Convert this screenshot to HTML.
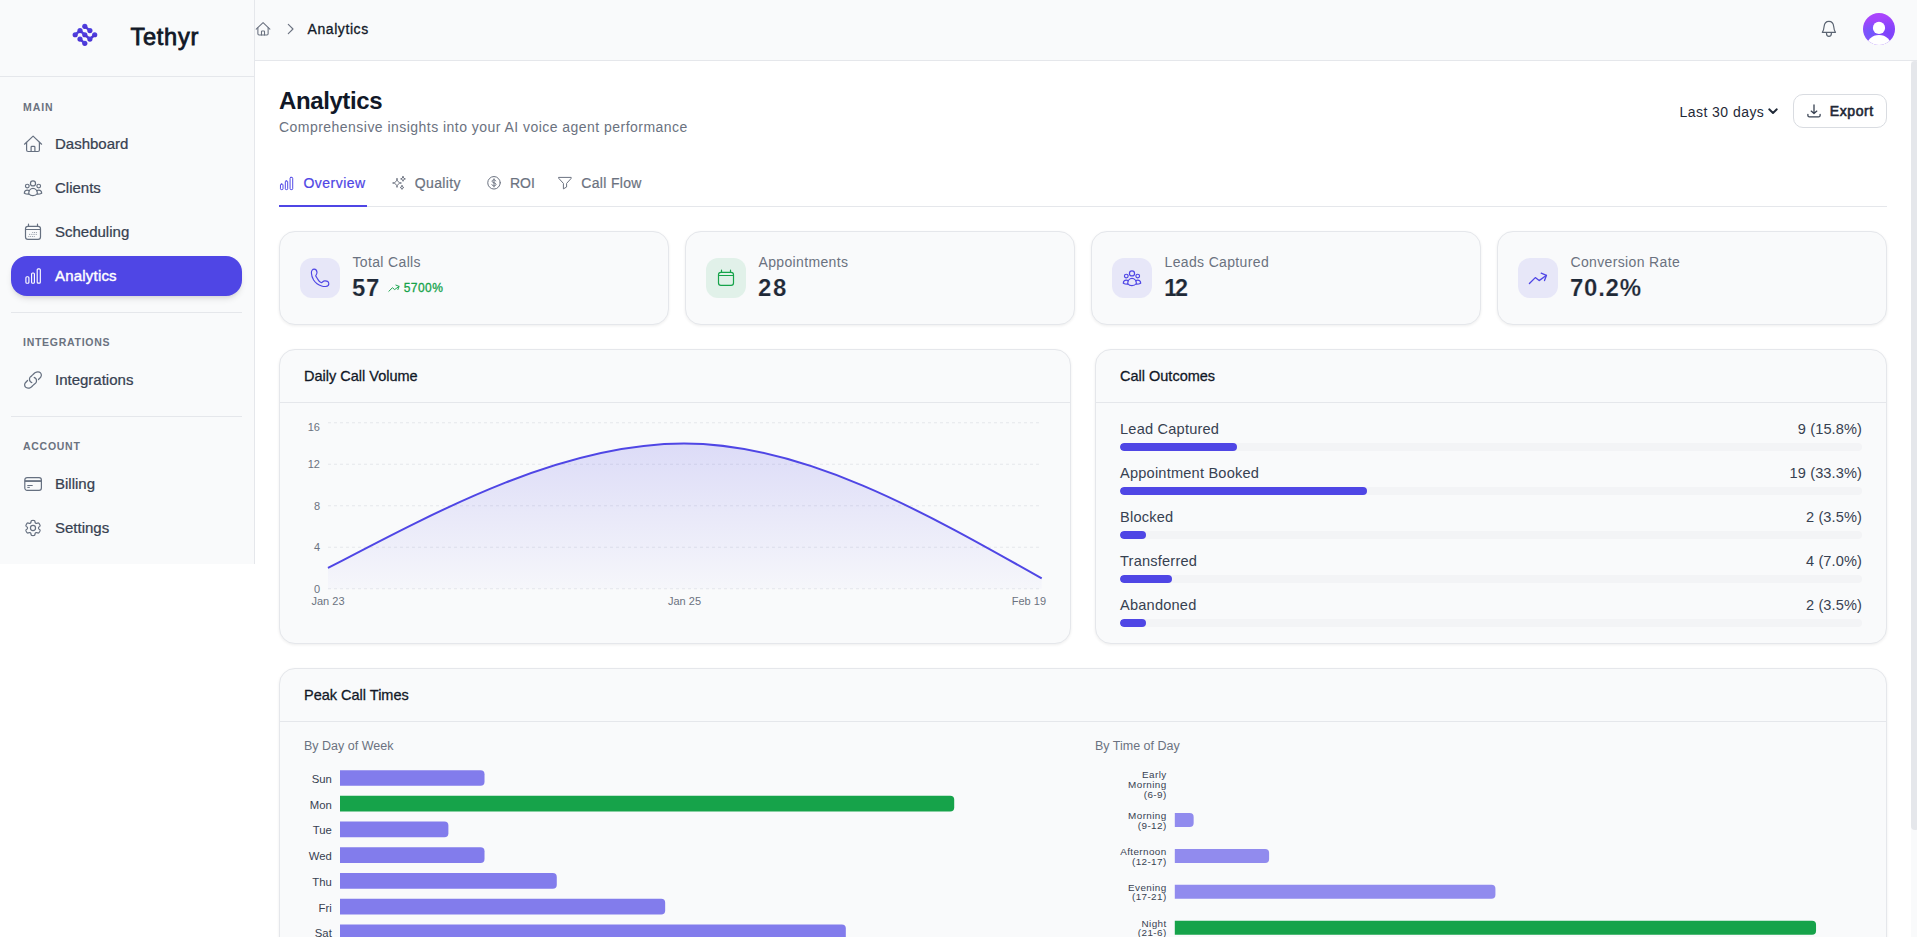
<!DOCTYPE html>
<html lang="en">
<head>
<meta charset="utf-8">
<title>Analytics - Tethyr</title>
<style>
*{box-sizing:border-box;margin:0;padding:0}
html,body{width:1917px;height:937px;overflow:hidden;background:#fff}
body{font-family:"Liberation Sans",sans-serif;color:#374151;position:relative;-webkit-font-smoothing:antialiased}
svg{display:block;overflow:visible}
.ab{position:absolute}
/* ---------- sidebar ---------- */
.sidebar{position:absolute;left:0;top:0;width:255px;height:564px;background:#f9fafb;border-right:1px solid #e5e7eb}
.brand{position:absolute;left:0;top:0;width:254px;height:77px;border-bottom:1px solid #e5e7eb}
.brand svg{position:absolute;left:71px;top:21px}
.brand .name{position:absolute;left:130.4px;top:21.3px;font-size:23.6px;line-height:32px;color:#111827;font-weight:400;-webkit-text-stroke:.8px #111827;white-space:nowrap;letter-spacing:.75px}
.sec{position:absolute;left:23px;font-size:10.5px;line-height:14px;font-weight:700;letter-spacing:.72px;color:#6b7280;white-space:nowrap}
.nav{position:absolute;left:11px;width:231px;height:40px;border-radius:14px;white-space:nowrap}
.nav svg{position:absolute;left:12px;top:10px}
.nav span{position:absolute;left:44px;top:10.2px;font-size:15px;line-height:20px;color:#374151;-webkit-text-stroke:.24px #374151}
.nav.on{background:#4f46e5;border-radius:16px;box-shadow:0 4px 6px -1px rgba(0,0,0,.1),0 2px 4px -2px rgba(0,0,0,.1)}
.nav.on span{color:#fff;-webkit-text-stroke:.4px #fff;letter-spacing:.2px}
.sdiv{position:absolute;left:11px;width:231px;height:1px;background:#e5e7eb}
/* ---------- topbar ---------- */
.topbar{position:absolute;left:255px;top:0;width:1662px;height:61px;background:#f9fafb;border-bottom:1px solid #e5e7eb}
.crumb{position:absolute;left:52.5px;top:19px;font-size:14px;line-height:20px;color:#111827;white-space:nowrap;-webkit-text-stroke:.3px #111827;letter-spacing:.58px}
.avatar{position:absolute;left:1608px;top:12.85px;width:32px;height:32px;border-radius:50%;overflow:hidden;background:radial-gradient(circle at 24% 62%,#6e59fc 0%,rgba(110,89,252,0) 42%),radial-gradient(circle at 80% 62%,#7a42fb 0%,rgba(122,66,251,0) 50%),linear-gradient(180deg,#ac45fd 0%,#a045fc 35%,#8a48fa 100%)}
/* ---------- main ---------- */
.main{position:absolute;left:255px;top:61px;width:1656px;height:876px;background:#fff}
h1{position:absolute;left:24px;top:24px;font-size:24px;line-height:32px;font-weight:700;color:#111827;letter-spacing:-.4px;white-space:nowrap}
.sub{position:absolute;left:24px;top:56px;font-size:14px;line-height:20px;color:#6b7280;white-space:nowrap;letter-spacing:.465px}
.range{position:absolute;left:1424.5px;top:41px;font-size:14px;line-height:20px;color:#1f2937;white-space:nowrap;letter-spacing:.45px}
.export{position:absolute;left:1538px;top:33px;width:94px;height:34px;border:1px solid #d9dce1;border-radius:10px;background:#fff;white-space:nowrap}
.export span{position:absolute;left:35.7px;top:6px;font-size:14px;line-height:20px;font-weight:400;color:#1f2937;-webkit-text-stroke:.6px #1f2937;letter-spacing:.62px;font-family:"Liberation Sans",sans-serif}
.tabs{position:absolute;left:24px;top:97px;width:1608px;height:49px;border-bottom:1px solid #e5e7eb}
.tab{position:absolute;top:0;height:49px;font-size:14px;line-height:20px;color:#6b7280;white-space:nowrap;-webkit-text-stroke:.2px #6b7280}
.tab span{position:absolute;top:15.4px}
.tab.on{color:#4f46e5;border-bottom:2px solid #4f46e5;-webkit-text-stroke:.22px #4f46e5}
.card{position:absolute;background:#f9fafb;border:1px solid #e5e7eb;border-radius:16px;box-shadow:0 1px 3px rgba(0,0,0,.07)}
.stat .ib{position:absolute;left:20px;top:26px;width:40px;height:40px;border-radius:12px}
.stat .ib svg{position:absolute;left:10px;top:10px}
.stat .lab{position:absolute;left:72.5px;top:20px;font-size:14px;line-height:20px;color:#6b7280;white-space:nowrap;letter-spacing:.35px}
.stat .val{position:absolute;left:72px;top:39.5px;font-size:24px;line-height:32px;font-weight:700;-webkit-text-stroke:.18px #f9fafb;color:#1f2937;white-space:nowrap;letter-spacing:.7px}
.ch{position:absolute;left:0;top:0;right:0;height:53px;border-bottom:1px solid #e5e7eb}
.ch span{position:absolute;left:24px;top:16px;font-size:14.5px;line-height:20px;color:#111827;white-space:nowrap;-webkit-text-stroke:.28px #111827}

.delta{position:absolute;left:123.7px;top:46px;font-size:12px;line-height:20px;color:#16a34a;white-space:nowrap;-webkit-text-stroke:.3px #16a34a;letter-spacing:.45px}
.orow{position:absolute;left:24px;width:742px;height:34px}
.ol{position:absolute;left:0;top:1px;letter-spacing:.2px;font-size:14.6px;line-height:20px;color:#374151;white-space:nowrap}
.or{position:absolute;right:0;top:1px;letter-spacing:.1px;font-size:14.6px;line-height:20px;color:#374151;white-space:nowrap}
.trk{position:absolute;left:0;top:25px;width:742px;height:8px;border-radius:4px;background:#f3f4f6;overflow:hidden}
.fil{height:8px;border-radius:4px;background:#4f46e5}
.ph{position:absolute;font-size:12.5px;line-height:18px;color:#6b7280;white-space:nowrap}
svg text{font-family:"Liberation Sans",sans-serif}
</style>
</head>
<body>
<aside class="sidebar">
  <div class="brand">
    <svg width="28" height="28" viewBox="0 0 28 28"><defs><linearGradient id="lg" x1="0" y1="0" x2="0" y2="1"><stop offset="0" stop-color="#5046e4"/><stop offset="1" stop-color="#4a2fd0"/></linearGradient></defs><g stroke="url(#lg)" fill="url(#lg)"><path d="M13.80 5.30 L18.90 9.55" fill="none" stroke-width="2.4" stroke-linecap="round" stroke-linejoin="round"/><path d="M4.20 13.75 L9.00 9.55 L13.80 13.75 L18.90 18.05 L23.70 13.75" fill="none" stroke-width="2.4" stroke-linecap="round" stroke-linejoin="round"/><path d="M9.00 18.05 L13.80 22.35" fill="none" stroke-width="2.4" stroke-linecap="round" stroke-linejoin="round"/><circle cx="13.80" cy="5.30" r="2.6" stroke="none"/><circle cx="18.90" cy="9.55" r="2.6" stroke="none"/><circle cx="4.20" cy="13.75" r="2.6" stroke="none"/><circle cx="9.00" cy="9.55" r="2.6" stroke="none"/><circle cx="13.80" cy="13.75" r="2.6" stroke="none"/><circle cx="18.90" cy="18.05" r="2.6" stroke="none"/><circle cx="23.70" cy="13.75" r="2.6" stroke="none"/><circle cx="9.00" cy="18.05" r="2.6" stroke="none"/><circle cx="13.80" cy="22.35" r="2.6" stroke="none"/></g></svg>
    <div class="name">Tethyr</div>
  </div>
  <div class="sec" style="top:99.8px;letter-spacing:.95px">MAIN</div>
<a class="nav" style="top:124px"><svg width="20" height="20" viewBox="0 0 20 20" fill="none" ><path d="M1.5 10.2 L10.1 2.1 L18.6 10.2" stroke="#667080" stroke-width="1.2" stroke-linecap="round" stroke-linejoin="round"/><path d="M3.6 8.4 V16 Q3.6 17.5 5.1 17.5 H14.9 Q16.4 17.5 16.4 16 V8.4" stroke="#667080" stroke-width="1.2" stroke-linecap="round" stroke-linejoin="round"/><path d="M8.1 17.5 V13.2 Q8.1 12.4 8.9 12.4 H11.1 Q11.9 12.4 11.9 13.2 V17.5" stroke="#667080" stroke-width="1.2" stroke-linecap="round" stroke-linejoin="round"/></svg><span>Dashboard</span></a>
<a class="nav" style="top:168px"><svg width="20" height="20" viewBox="0 0 20 20" fill="none" ><circle cx="10" cy="5.4" r="2.55" stroke="#667080" stroke-width="1.2" stroke-linecap="round" stroke-linejoin="round"/><circle cx="4.3" cy="8.1" r="1.85" stroke="#667080" stroke-width="1.2" stroke-linecap="round" stroke-linejoin="round"/><circle cx="15.7" cy="8.1" r="1.85" stroke="#667080" stroke-width="1.2" stroke-linecap="round" stroke-linejoin="round"/><path d="M5.7 15.6 C5.7 12.6 7.6 10.4 10 10.4 C12.4 10.4 14.4 12.6 14.4 15.5 C13.2 17 11.7 17.7 10 17.7 C8.3 17.7 6.8 17 5.7 15.6 Z" stroke="#667080" stroke-width="1.2" stroke-linecap="round" stroke-linejoin="round"/><path d="M6.3 12.9 C5.7 12.4 5 12.2 4.3 12.2 C2.6 12.2 1.4 13.5 1.3 15.2 C2.5 15.9 4 16.3 5.8 16.2" stroke="#667080" stroke-width="1.2" stroke-linecap="round" stroke-linejoin="round"/><path d="M13.7 12.9 C14.3 12.4 15 12.2 15.7 12.2 C17.4 12.2 18.6 13.5 18.7 15.2 C17.5 15.9 16 16.3 14.2 16.2" stroke="#667080" stroke-width="1.2" stroke-linecap="round" stroke-linejoin="round"/></svg><span>Clients</span></a>
<a class="nav" style="top:212px"><svg width="20" height="20" viewBox="0 0 20 20" fill="none" ><rect x="2.5" y="4.4" width="15" height="13" rx="2.4" stroke="#667080" stroke-width="1.2" stroke-linecap="round" stroke-linejoin="round"/><path d="M5.5 2.2 V4.4 M14.5 2.2 V4.4 M2.6 7.5 H17.4" stroke="#667080" stroke-width="1.2" stroke-linecap="round" stroke-linejoin="round"/><path d="M9.3 10.5 H14.6 M6 12.4 H14 M5.4 14.5 H12.5" stroke="#667080" stroke-width="0.9" stroke-dasharray="0.9 0.9" opacity=".8"/></svg><span>Scheduling</span></a>
<a class="nav on" style="top:256px"><svg width="20" height="20" viewBox="0 0 20 20" fill="none" ><rect x="2.9" y="10.7" width="3" height="6.5" rx="1" stroke="#ffffff" stroke-width="1.15" stroke-linecap="round" stroke-linejoin="round"/><rect x="8.6" y="7" width="2.8" height="10.2" rx="1" stroke="#ffffff" stroke-width="1.15" stroke-linecap="round" stroke-linejoin="round"/><rect x="14.2" y="2.8" width="3.1" height="14.4" rx="1" stroke="#ffffff" stroke-width="1.15" stroke-linecap="round" stroke-linejoin="round"/></svg><span>Analytics</span></a>
<div class="sdiv" style="top:312px"></div>
<div class="sec" style="top:335px">INTEGRATIONS</div>
<a class="nav" style="top:360px"><svg width="20" height="20" viewBox="0 0 20 20" fill="none" ><path d="M15.47 9.50 C15.84 9.09 17.22 7.77 17.70 7.04 C18.18 6.31 18.39 5.82 18.36 5.12 C18.33 4.42 18.07 3.40 17.50 2.85 C16.93 2.30 15.79 1.86 14.94 1.81 C14.09 1.76 13.25 2.04 12.38 2.56 C11.51 3.08 10.59 4.12 9.70 4.90 C8.81 5.68 7.57 6.51 7.04 7.26 C6.51 8.01 6.49 8.72 6.51 9.39 C6.53 10.06 6.78 10.77 7.15 11.30 C7.52 11.84 8.48 12.38 8.75 12.60" stroke="#667080" stroke-width="1.25" stroke-linecap="round" stroke-linejoin="round"/><path d="M15.47 9.50 C15.84 9.09 17.22 7.77 17.70 7.04 C18.18 6.31 18.39 5.82 18.36 5.12 C18.33 4.42 18.07 3.40 17.50 2.85 C16.93 2.30 15.79 1.86 14.94 1.81 C14.09 1.76 13.25 2.04 12.38 2.56 C11.51 3.08 10.59 4.12 9.70 4.90 C8.81 5.68 7.57 6.51 7.04 7.26 C6.51 8.01 6.49 8.72 6.51 9.39 C6.53 10.06 6.78 10.77 7.15 11.30 C7.52 11.84 8.48 12.38 8.75 12.60" transform="rotate(180 10 10)" stroke="#667080" stroke-width="1.25" stroke-linecap="round" stroke-linejoin="round"/></svg><span>Integrations</span></a>
<div class="sdiv" style="top:416px"></div>
<div class="sec" style="top:439px">ACCOUNT</div>
<a class="nav" style="top:464px"><svg width="20" height="20" viewBox="0 0 20 20" fill="none" ><rect x="1.8" y="3.6" width="16.6" height="12.7" rx="2.3" stroke="#667080" stroke-width="1.2" stroke-linecap="round" stroke-linejoin="round"/><path d="M1.8 7.05 H18.4" stroke="#667080" stroke-width="1.8"/><path d="M4.3 11.5 H9.7 M4.3 13.4 H6.8" stroke="#667080" stroke-width="1" /></svg><span>Billing</span></a>
<a class="nav" style="top:508px"><svg width="20" height="20" viewBox="0 0 20 20" fill="none" ><path d="M15.52 10.00 L15.52 10.14 L15.53 10.29 L15.55 10.44 L15.58 10.59 L15.66 10.74 L15.80 10.92 L16.02 11.12 L16.34 11.35 L16.66 11.60 L16.91 11.85 L17.04 12.09 L17.08 12.30 L17.07 12.50 L17.02 12.70 L16.96 12.88 L16.89 13.07 L16.81 13.25 L16.73 13.43 L16.63 13.60 L16.54 13.77 L16.44 13.94 L16.33 14.11 L16.22 14.27 L16.10 14.43 L15.98 14.59 L15.85 14.74 L15.70 14.87 L15.53 14.98 L15.33 15.05 L15.06 15.06 L14.71 14.97 L14.33 14.81 L13.98 14.66 L13.69 14.56 L13.47 14.53 L13.30 14.54 L13.15 14.58 L13.01 14.64 L12.88 14.71 L12.76 14.78 L12.63 14.85 L12.51 14.93 L12.39 15.02 L12.28 15.13 L12.18 15.27 L12.10 15.48 L12.05 15.78 L12.00 16.16 L11.95 16.57 L11.85 16.91 L11.71 17.14 L11.55 17.28 L11.37 17.37 L11.18 17.43 L10.98 17.47 L10.79 17.50 L10.59 17.52 L10.40 17.54 L10.20 17.55 L10.00 17.55 L9.80 17.55 L9.60 17.54 L9.41 17.52 L9.21 17.50 L9.02 17.47 L8.82 17.43 L8.63 17.37 L8.45 17.28 L8.29 17.14 L8.15 16.91 L8.05 16.57 L8.00 16.16 L7.95 15.78 L7.90 15.48 L7.82 15.27 L7.72 15.13 L7.61 15.02 L7.49 14.93 L7.37 14.85 L7.24 14.78 L7.12 14.71 L6.99 14.64 L6.85 14.58 L6.70 14.54 L6.53 14.53 L6.31 14.56 L6.02 14.66 L5.67 14.81 L5.29 14.97 L4.94 15.06 L4.67 15.05 L4.47 14.98 L4.30 14.87 L4.15 14.74 L4.02 14.59 L3.90 14.43 L3.78 14.27 L3.67 14.11 L3.56 13.94 L3.46 13.77 L3.37 13.60 L3.27 13.43 L3.19 13.25 L3.11 13.07 L3.04 12.88 L2.98 12.70 L2.93 12.50 L2.92 12.30 L2.96 12.09 L3.09 11.85 L3.34 11.60 L3.66 11.35 L3.98 11.12 L4.20 10.92 L4.34 10.74 L4.42 10.59 L4.45 10.44 L4.47 10.29 L4.48 10.14 L4.48 10.00 L4.48 9.86 L4.47 9.71 L4.45 9.56 L4.42 9.41 L4.34 9.26 L4.20 9.08 L3.98 8.88 L3.66 8.65 L3.34 8.40 L3.09 8.15 L2.96 7.91 L2.92 7.70 L2.93 7.50 L2.98 7.30 L3.04 7.12 L3.11 6.93 L3.19 6.75 L3.27 6.57 L3.37 6.40 L3.46 6.23 L3.56 6.06 L3.67 5.89 L3.78 5.73 L3.90 5.57 L4.02 5.41 L4.15 5.26 L4.30 5.13 L4.47 5.02 L4.67 4.95 L4.94 4.94 L5.29 5.03 L5.67 5.19 L6.02 5.34 L6.31 5.44 L6.53 5.47 L6.70 5.46 L6.85 5.42 L6.99 5.36 L7.12 5.29 L7.24 5.22 L7.37 5.15 L7.49 5.07 L7.61 4.98 L7.72 4.87 L7.82 4.73 L7.90 4.52 L7.95 4.22 L8.00 3.84 L8.05 3.43 L8.15 3.09 L8.29 2.86 L8.45 2.72 L8.63 2.63 L8.82 2.57 L9.02 2.53 L9.21 2.50 L9.41 2.48 L9.60 2.46 L9.80 2.45 L10.00 2.45 L10.20 2.45 L10.40 2.46 L10.59 2.48 L10.79 2.50 L10.98 2.53 L11.18 2.57 L11.37 2.63 L11.55 2.72 L11.71 2.86 L11.85 3.09 L11.95 3.43 L12.00 3.84 L12.05 4.22 L12.10 4.52 L12.18 4.73 L12.28 4.87 L12.39 4.98 L12.51 5.07 L12.63 5.15 L12.76 5.22 L12.88 5.29 L13.01 5.36 L13.15 5.42 L13.30 5.46 L13.47 5.47 L13.69 5.44 L13.98 5.34 L14.33 5.19 L14.71 5.03 L15.06 4.94 L15.33 4.95 L15.53 5.02 L15.70 5.13 L15.85 5.26 L15.98 5.41 L16.10 5.57 L16.22 5.73 L16.33 5.89 L16.44 6.06 L16.54 6.23 L16.63 6.40 L16.73 6.57 L16.81 6.75 L16.89 6.93 L16.96 7.12 L17.02 7.30 L17.07 7.50 L17.08 7.70 L17.04 7.91 L16.91 8.15 L16.66 8.40 L16.34 8.65 L16.02 8.88 L15.80 9.08 L15.66 9.26 L15.58 9.41 L15.55 9.56 L15.53 9.71 L15.52 9.86 Z" stroke="#667080" stroke-width="1.2" stroke-linecap="round" stroke-linejoin="round"/><circle cx="10" cy="10" r="2.55" stroke="#667080" stroke-width="1.2" stroke-linecap="round" stroke-linejoin="round"/></svg><span>Settings</span></a>

</aside>
<header class="topbar">
  <div class="ab" style="left:0;top:21px"><svg width="16" height="16" viewBox="0 0 20 20" fill="none" ><path d="M1.5 10.2 L10.1 2.1 L18.6 10.2" stroke="#6b7280" stroke-width="1.35" stroke-linecap="round" stroke-linejoin="round"/><path d="M3.6 8.4 V16 Q3.6 17.5 5.1 17.5 H14.9 Q16.4 17.5 16.4 16 V8.4" stroke="#6b7280" stroke-width="1.35" stroke-linecap="round" stroke-linejoin="round"/><path d="M8.1 17.5 V13.2 Q8.1 12.4 8.9 12.4 H11.1 Q11.9 12.4 11.9 13.2 V17.5" stroke="#6b7280" stroke-width="1.35" stroke-linecap="round" stroke-linejoin="round"/></svg></div>
<div class="ab" style="left:27.3px;top:19.75px"><svg width="18" height="18" viewBox="0 0 20 20" fill="none" ><path d="M7 4.8 L12.2 10 L7 15.2" stroke="#6b7280" stroke-width="1.25" stroke-linecap="round" stroke-linejoin="round"/></svg></div>
<div class="crumb">Analytics</div>
<div class="ab" style="left:1564px;top:19px"><svg width="20" height="20" viewBox="0 0 20 20" fill="none" ><path d="M3.3 13.3 C4.3 12 4.9 10 5.1 7.5 C5.4 4.3 7.3 2.3 9.9 2.3 C12.5 2.3 14.4 4.3 14.7 7.5 C14.9 10 15.5 12 16.5 13.3 Z" stroke="#5b6472" stroke-width="1.2" stroke-linecap="round" stroke-linejoin="round"/><path d="M7.5 14.2 A2.45 3.2 0 0 0 12.4 14.2" stroke="#5b6472" stroke-width="1.2" stroke-linecap="round" stroke-linejoin="round"/></svg></div>
<div class="avatar"><svg width="32" height="32" viewBox="0 0 32 32"><circle cx="16" cy="14.9" r="6.1" fill="#fff"/><ellipse cx="16" cy="33.8" rx="12.7" ry="11.8" fill="#fff"/></svg></div>

</header>
<main class="main">
  <h1>Analytics</h1>
  <div class="sub">Comprehensive insights into your AI voice agent performance</div>
  <div class="range">Last 30 days</div>
<svg class="ab" style="left:1513px;top:47px" width="10" height="7" viewBox="0 0 10 7" fill="none"><path d="M1.2 1.3 L5 5 L8.8 1.3" stroke="#1f2937" stroke-width="1.9" stroke-linecap="round" stroke-linejoin="round"/></svg>
<button class="export"><div class="ab" style="left:10px;top:6px"><svg width="20" height="20" viewBox="0 0 20 20" fill="none" ><path d="M10 4 V12.3 M7.2 10.1 L10 12.6 L12.8 10.1" stroke="#374151" stroke-width="1.3" stroke-linecap="round" stroke-linejoin="round"/><path d="M3.9 13.4 V14.4 Q3.9 15.9 5.4 15.9 H14.6 Q16.1 15.9 16.1 14.4 V13.4" stroke="#374151" stroke-width="1.3" stroke-linecap="round" stroke-linejoin="round"/></svg></div><span>Export</span></button>
<nav class="tabs">
<a class="tab on" style="left:0;width:88px"><div class="ab" style="left:-1px;top:16.5px"><svg width="17" height="17" viewBox="0 0 20 20" fill="none" ><rect x="2.9" y="10.7" width="3" height="6.5" rx="1" stroke="#4f46e5" stroke-width="1.15" stroke-linecap="round" stroke-linejoin="round"/><rect x="8.6" y="7" width="2.8" height="10.2" rx="1" stroke="#4f46e5" stroke-width="1.15" stroke-linecap="round" stroke-linejoin="round"/><rect x="14.2" y="2.8" width="3.1" height="14.4" rx="1" stroke="#4f46e5" stroke-width="1.15" stroke-linecap="round" stroke-linejoin="round"/></svg></div><span style="left:24.5px;letter-spacing:.48px">Overview</span></a>
<a class="tab" style="left:112px;width:70px"><div class="ab" style="left:-4px;top:15px"><svg width="20" height="20" viewBox="0 0 20 20" fill="none" ><path d="M10 5.6 Q10.176 9.824 14.4 10 Q10.176 10.176 10 14.4 Q9.824 10.176 5.6 10 Q9.824 9.824 10 5.6 Z" stroke="#6b7280" stroke-width="0.95" stroke-linecap="round" stroke-linejoin="round"/><path d="M16 3.5000000000000004 Q16.144 5.756 18.4 5.9 Q16.144 6.0440000000000005 16 8.3 Q15.856 6.0440000000000005 13.6 5.9 Q15.856 5.756 16 3.5000000000000004 Z" stroke="#6b7280" stroke-width="0.95" stroke-linecap="round" stroke-linejoin="round"/><path d="M15 12.6 Q15.152 14.348 16.9 14.5 Q15.152 14.652 15 16.4 Q14.848 14.652 13.1 14.5 Q14.848 14.348 15 12.6 Z" stroke="#6b7280" stroke-width="0.95" stroke-linecap="round" stroke-linejoin="round"/></svg></div><span style="left:23.75px;letter-spacing:.36px">Quality</span></a>
<a class="tab" style="left:206px;width:48px"><div class="ab" style="left:-1px;top:15px"><svg width="20" height="20" viewBox="0 0 20 20" fill="none" ><circle cx="10" cy="9.8" r="6.25" stroke="#6b7280" stroke-width="1.0" stroke-linecap="round" stroke-linejoin="round"/><path d="M11.8 7.9 C11.5 7.1 10.8 6.8 10 6.8 C8.9 6.8 8.1 7.4 8.1 8.3 C8.1 10.3 12 9.3 12 11.4 C12 12.3 11.1 12.9 10 12.9 C9 12.9 8.2 12.5 7.9 11.7 M10 5.8 V13.9" stroke="#6b7280" stroke-width="1.0" stroke-linecap="round" stroke-linejoin="round"/></svg></div><span style="left:25px">ROI</span></a>
<a class="tab" style="left:278px;width:84px"><div class="ab" style="left:-2px;top:15px"><svg width="20" height="20" viewBox="0 0 20 20" fill="none" ><path d="M3.9 4.4 H16.2 L16 5.6 L11.6 10.4 V14 L8.4 15.9 V10.4 L4 5.6 Z" stroke="#6b7280" stroke-width="1.0" stroke-linecap="round" stroke-linejoin="round"/></svg></div><span style="left:24.25px;letter-spacing:.33px">Call Flow</span></a>
</nav>
<section class="card stat" style="left:24px;top:170px;width:390px;height:94px"><div class="ib" style="background:rgba(79,70,229,.1)"><svg width="20" height="20" viewBox="0 0 20 20" fill="none" ><path d="M4.2 1.1 C2.4 1.1 1.3 2.8 1.4 5 C1.5 7.2 2.2 9.6 3.6 12 C5.4 14.8 8.2 17 11.6 18 C13.2 18.5 14.6 18.6 15.7 18.5 C17.6 18.3 18.9 17.2 18.8 15.7 C18.7 14 16.8 12.8 14.7 12.9 C13.2 13 12.4 14.3 11.4 14.7 C10 14.5 8.8 13 8 11.6 C7 10 6.3 8.6 5.7 7.8 C6.2 6.8 7.1 5.8 7 4.4 C6.9 2.6 5.8 1.1 4.2 1.1 Z" stroke="#4f46e5" stroke-width="1.15" stroke-linecap="round" stroke-linejoin="round"/></svg></div><div class="lab">Total Calls</div><div class="val" style="letter-spacing:0.7px">57</div><div class="ab" style="left:108px;top:50px"><svg width="12" height="12" viewBox="0 0 20 20" fill="none" ><path d="M1.4 15.5 L7.3 9.6 L11.1 12.6 L18.2 7.5" stroke="#16a34a" stroke-width="1.6" stroke-linecap="round" stroke-linejoin="round"/><path d="M13.2 5.2 L18.5 7.3 L16.5 12.6" stroke="#16a34a" stroke-width="1.6" stroke-linecap="round" stroke-linejoin="round"/></svg></div><div class="delta">5700%</div></section>
<section class="card stat" style="left:430px;top:170px;width:390px;height:94px"><div class="ib" style="background:rgba(22,163,74,.1)"><svg width="20" height="20" viewBox="0 0 20 20" fill="none" ><rect x="2.5" y="4.4" width="15" height="13" rx="2.4" stroke="#16a34a" stroke-width="1.2" stroke-linecap="round" stroke-linejoin="round"/><path d="M5.5 2.2 V4.4 M14.5 2.2 V4.4 M2.6 7.5 H17.4" stroke="#16a34a" stroke-width="1.2" stroke-linecap="round" stroke-linejoin="round"/></svg></div><div class="lab">Appointments</div><div class="val" style="letter-spacing:1.6px">28</div></section>
<section class="card stat" style="left:836px;top:170px;width:390px;height:94px"><div class="ib" style="background:rgba(79,70,229,.1)"><svg width="20" height="20" viewBox="0 0 20 20" fill="none" ><circle cx="10" cy="5.4" r="2.55" stroke="#4f46e5" stroke-width="1.2" stroke-linecap="round" stroke-linejoin="round"/><circle cx="4.3" cy="8.1" r="1.85" stroke="#4f46e5" stroke-width="1.2" stroke-linecap="round" stroke-linejoin="round"/><circle cx="15.7" cy="8.1" r="1.85" stroke="#4f46e5" stroke-width="1.2" stroke-linecap="round" stroke-linejoin="round"/><path d="M5.7 15.6 C5.7 12.6 7.6 10.4 10 10.4 C12.4 10.4 14.4 12.6 14.4 15.5 C13.2 17 11.7 17.7 10 17.7 C8.3 17.7 6.8 17 5.7 15.6 Z" stroke="#4f46e5" stroke-width="1.2" stroke-linecap="round" stroke-linejoin="round"/><path d="M6.3 12.9 C5.7 12.4 5 12.2 4.3 12.2 C2.6 12.2 1.4 13.5 1.3 15.2 C2.5 15.9 4 16.3 5.8 16.2" stroke="#4f46e5" stroke-width="1.2" stroke-linecap="round" stroke-linejoin="round"/><path d="M13.7 12.9 C14.3 12.4 15 12.2 15.7 12.2 C17.4 12.2 18.6 13.5 18.7 15.2 C17.5 15.9 16 16.3 14.2 16.2" stroke="#4f46e5" stroke-width="1.2" stroke-linecap="round" stroke-linejoin="round"/></svg></div><div class="lab">Leads Captured</div><div class="val" style="letter-spacing:-2.6px">12</div></section>
<section class="card stat" style="left:1242px;top:170px;width:390px;height:94px"><div class="ib" style="background:rgba(79,70,229,.1)"><svg width="20" height="20" viewBox="0 0 20 20" fill="none" ><path d="M1.4 15.5 L7.3 9.6 L11.1 12.6 L18.2 7.5" stroke="#4f46e5" stroke-width="1.3" stroke-linecap="round" stroke-linejoin="round"/><path d="M13.2 5.2 L18.5 7.3 L16.5 12.6" stroke="#4f46e5" stroke-width="1.3" stroke-linecap="round" stroke-linejoin="round"/></svg></div><div class="lab">Conversion Rate</div><div class="val" style="letter-spacing:0.75px">70.2%</div></section>
<section class="card" style="left:24px;top:288px;width:792px;height:295px"><div class="ch"><span>Daily Call Volume</span></div>
<svg class="ab" style="left:0;top:0" width="790" height="293" viewBox="280 350 790 293"><defs><linearGradient id="ag" x1="0" y1="443" x2="0" y2="589" gradientUnits="userSpaceOnUse"><stop offset="0" stop-color="#4f46e5" stop-opacity=".17"/><stop offset="1" stop-color="#4f46e5" stop-opacity=".02"/></linearGradient></defs><line x1="328" x2="1039" y1="588.75" y2="588.75" stroke="#e5e7eb" stroke-width="1" stroke-dasharray="3 3"/><text x="320" y="592.75" text-anchor="end" font-size="11" fill="#6b7280">0</text><line x1="328" x2="1039" y1="547.25" y2="547.25" stroke="#e5e7eb" stroke-width="1" stroke-dasharray="3 3"/><text x="320" y="551.25" text-anchor="end" font-size="11" fill="#6b7280">4</text><line x1="328" x2="1039" y1="505.75" y2="505.75" stroke="#e5e7eb" stroke-width="1" stroke-dasharray="3 3"/><text x="320" y="509.75" text-anchor="end" font-size="11" fill="#6b7280">8</text><line x1="328" x2="1039" y1="464.25" y2="464.25" stroke="#e5e7eb" stroke-width="1" stroke-dasharray="3 3"/><text x="320" y="468.25" text-anchor="end" font-size="11" fill="#6b7280">12</text><line x1="328" x2="1039" y1="422.75" y2="422.75" stroke="#e5e7eb" stroke-width="1" stroke-dasharray="3 3"/><text x="320" y="431.15" text-anchor="end" font-size="11" fill="#6b7280">16</text><path d="M328 568.00 C446.67 505.75 565.33 443.50 684 443.50 C803.2 443.50 922.5 510.94 1041.7 578.38 L1041.7 588.75 L328 588.75 Z" fill="url(#ag)"/><path d="M328 568.00 C446.67 505.75 565.33 443.50 684 443.50 C803.2 443.50 922.5 510.94 1041.7 578.38" fill="none" stroke="#4f46e5" stroke-width="2"/><text x="328" y="605" text-anchor="middle" font-size="11" fill="#6b7280">Jan 23</text><text x="684.5" y="605" text-anchor="middle" font-size="11" fill="#6b7280">Jan 25</text><text x="1046" y="605" text-anchor="end" font-size="11" fill="#6b7280">Feb 19</text></svg></section>
<section class="card" style="left:840px;top:288px;width:792px;height:295px"><div class="ch"><span>Call Outcomes</span></div>
<div class="orow" style="top:68px"><span class="ol">Lead Captured</span><span class="or">9 (15.8%)</span><div class="trk"><div class="fil" style="width:15.8%"></div></div></div>
<div class="orow" style="top:112px"><span class="ol">Appointment Booked</span><span class="or">19 (33.3%)</span><div class="trk"><div class="fil" style="width:33.3%"></div></div></div>
<div class="orow" style="top:156px"><span class="ol">Blocked</span><span class="or">2 (3.5%)</span><div class="trk"><div class="fil" style="width:3.5%"></div></div></div>
<div class="orow" style="top:200px"><span class="ol">Transferred</span><span class="or">4 (7.0%)</span><div class="trk"><div class="fil" style="width:7.0%"></div></div></div>
<div class="orow" style="top:244px"><span class="ol">Abandoned</span><span class="or">2 (3.5%)</span><div class="trk"><div class="fil" style="width:3.5%"></div></div></div>
</section>
<section class="card" style="left:24px;top:607px;width:1608px;height:360px"><div class="ch"><span>Peak Call Times</span></div>
<div class="ph" style="left:24px;top:67.5px">By Day of Week</div><div class="ph" style="left:815px;top:67.5px">By Time of Day</div>
<svg class="ab" style="left:0;top:0" width="1606" height="358" viewBox="280 669 1606 358"><text x="331.8" y="783.00" text-anchor="end" font-size="11.3" fill="#374151">Sun</text><path d="M340.00 770.15 H480.52 A4 4 0 0 1 484.52 774.15 V781.85 A4 4 0 0 1 480.52 785.85 H340.00 Z" fill="#827cec"/><text x="331.8" y="808.72" text-anchor="end" font-size="11.3" fill="#374151">Mon</text><path d="M340.00 795.87 H950.21 A4 4 0 0 1 954.21 799.87 V807.57 A4 4 0 0 1 950.21 811.57 H340.00 Z" fill="#16a34a"/><text x="331.8" y="834.44" text-anchor="end" font-size="11.3" fill="#374151">Tue</text><path d="M340.00 821.59 H444.39 A4 4 0 0 1 448.39 825.59 V833.29 A4 4 0 0 1 444.39 837.29 H340.00 Z" fill="#827cec"/><text x="331.8" y="860.16" text-anchor="end" font-size="11.3" fill="#374151">Wed</text><path d="M340.00 847.31 H480.52 A4 4 0 0 1 484.52 851.31 V859.01 A4 4 0 0 1 480.52 863.01 H340.00 Z" fill="#827cec"/><text x="331.8" y="885.88" text-anchor="end" font-size="11.3" fill="#374151">Thu</text><path d="M340.00 873.03 H552.78 A4 4 0 0 1 556.78 877.03 V884.73 A4 4 0 0 1 552.78 888.73 H340.00 Z" fill="#827cec"/><text x="331.8" y="911.60" text-anchor="end" font-size="11.3" fill="#374151">Fri</text><path d="M340.00 898.75 H661.17 A4 4 0 0 1 665.17 902.75 V910.45 A4 4 0 0 1 661.17 914.45 H340.00 Z" fill="#827cec"/><text x="331.8" y="937.32" text-anchor="end" font-size="11.3" fill="#374151">Sat</text><path d="M340.00 924.47 H841.82 A4 4 0 0 1 845.82 928.47 V936.17 A4 4 0 0 1 841.82 940.17 H340.00 Z" fill="#827cec"/><text x="1166.6" y="777.90" text-anchor="end" font-size="9.9" letter-spacing=".4" fill="#374151">Early</text><text x="1166.6" y="787.70" text-anchor="end" font-size="9.9" letter-spacing=".4" fill="#374151">Morning</text><text x="1166.6" y="797.50" text-anchor="end" font-size="9.9" letter-spacing=".4" fill="#374151">(6-9)</text><text x="1166.6" y="818.75" text-anchor="end" font-size="9.9" letter-spacing=".4" fill="#374151">Morning</text><text x="1166.6" y="828.55" text-anchor="end" font-size="9.9" letter-spacing=".4" fill="#374151">(9-12)</text><path d="M1174.80 812.95 H1189.66 A4 4 0 0 1 1193.66 816.95 V822.95 A4 4 0 0 1 1189.66 826.95 H1174.80 Z" fill="#918bee"/><text x="1166.6" y="854.70" text-anchor="end" font-size="9.9" letter-spacing=".4" fill="#374151">Afternoon</text><text x="1166.6" y="864.50" text-anchor="end" font-size="9.9" letter-spacing=".4" fill="#374151">(12-17)</text><path d="M1174.80 848.90 H1265.10 A4 4 0 0 1 1269.10 852.90 V858.90 A4 4 0 0 1 1265.10 862.90 H1174.80 Z" fill="#918bee"/><text x="1166.6" y="890.65" text-anchor="end" font-size="9.9" letter-spacing=".4" fill="#374151">Evening</text><text x="1166.6" y="900.45" text-anchor="end" font-size="9.9" letter-spacing=".4" fill="#374151">(17-21)</text><path d="M1174.80 884.85 H1491.42 A4 4 0 0 1 1495.42 888.85 V894.85 A4 4 0 0 1 1491.42 898.85 H1174.80 Z" fill="#918bee"/><text x="1166.6" y="926.60" text-anchor="end" font-size="9.9" letter-spacing=".4" fill="#374151">Night</text><text x="1166.6" y="936.40" text-anchor="end" font-size="9.9" letter-spacing=".4" fill="#374151">(21-6)</text><path d="M1174.80 920.80 H1812.04 A4 4 0 0 1 1816.04 924.80 V930.80 A4 4 0 0 1 1812.04 934.80 H1174.80 Z" fill="#16a34a"/></svg></section>

</main>
<div class="ab" style="left:1911px;top:61px;width:6px;height:876px;background:#f9fafb"></div><div class="ab" style="left:1911px;top:61px;width:8px;height:769px;background:#e5e7eb;border-radius:4px"></div>

</body>
</html>
